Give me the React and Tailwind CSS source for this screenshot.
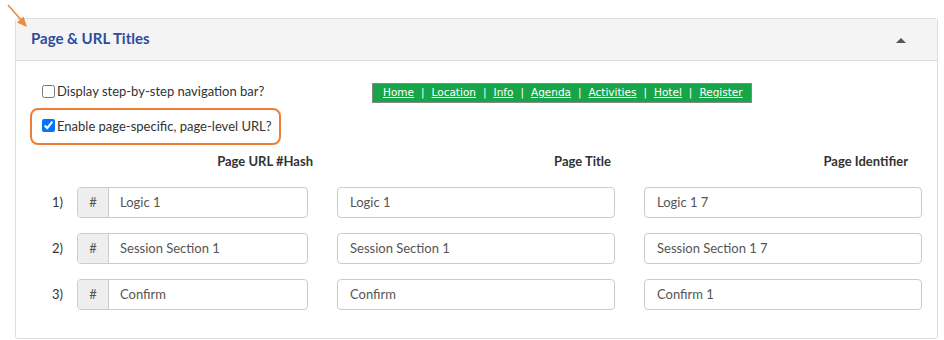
import React from "react";

const rows = [
  { n: "1)", hash: "Logic 1", title: "Logic 1", id: "Logic 1 7" },
  { n: "2)", hash: "Session Section 1", title: "Session Section 1", id: "Session Section 1 7" },
  { n: "3)", hash: "Confirm", title: "Confirm", id: "Confirm 1" },
];

const links = ["Home", "Location", "Info", "Agenda", "Activities", "Hotel", "Register"];

export default function App() {
  return (
    <div className="relative w-[944px] h-[340px] bg-white pt-[18px] pl-[15px]" style={{ fontFamily: "Lato, 'Noto Sans', sans-serif" }}>
      <svg className="absolute left-0 top-0" width="34" height="32" viewBox="0 0 34 32">
        <line x1="8" y1="5" x2="22" y2="21" stroke="#ef8a3d" strokeWidth="1.6" />
        <polygon points="27,27 17,22.5 23.5,16.5" fill="#ef8a3d" />
      </svg>
      <div className="w-[923px] h-[321px] border border-[#dddddd] rounded-[3px] bg-white">
        <div className="h-[42px] bg-[#f4f4f4] border-b border-[#dddddd] flex items-center justify-between pl-[15px] pr-[31px]">
          <span className="text-[15px] font-bold text-[#2d4c9c] -mt-[2px]">Page &amp; URL Titles</span>
          <span className="w-0 h-0 border-l-[5px] border-r-[5px] border-b-[5px] border-l-transparent border-r-transparent border-b-[#555555] mt-[1px]"></span>
        </div>
        <div className="pt-[22px]">
          <div className="flex items-center h-[20px]">
            <label className="w-[356px] pl-[26px] flex items-center text-[13px] text-[#333333]">
              <input type="checkbox" className="w-[13px] h-[13px] m-0 mr-[2px] -mt-[4px]" />
              <span className="-mt-[2px]">Display step-by-step navigation bar?</span>
            </label>
            <div className="h-[20px] w-[380px] bg-[#17a54a] border border-[#888888] flex items-center pl-[10px] text-white text-[10.5px]" style={{ fontFamily: "'DejaVu Sans', Verdana, sans-serif" }}>
              {links.map((l, i) => (
                <React.Fragment key={l}>
                  <span className="underline">{l}</span>
                  {i < links.length - 1 && <span className="mx-[7px]">|</span>}
                </React.Fragment>
              ))}
            </div>
          </div>
          <div className="ml-[14px] mt-[5px] w-[251px] h-[37px] border-2 border-[#ec7f35] rounded-[8px] flex items-center pl-[10px] text-[13px] text-[#333333]">
            <input type="checkbox" defaultChecked className="w-[13px] h-[13px] m-0 mr-[2px] -mt-[2px]" />
            <span>Enable page-specific, page-level URL?</span>
          </div>
          <div className="flex mt-[9px] h-[16px] items-center text-[13px] font-bold text-[#333333]">
            <div className="w-[297px] text-right">Page URL #Hash</div>
            <div className="w-[298px] text-right">Page Title</div>
            <div className="w-[297px] text-right">Page Identifier</div>
          </div>
          <div className="mt-[17px] flex flex-col gap-[15px]">
            {rows.map((r) => (
              <div key={r.n} className="flex items-center h-[31px]">
                <div className="w-[61px] pl-[36px] text-[13px] text-[#333333]">{r.n}</div>
                <div className="w-[231px] h-[31px] flex border border-[#cccccc] rounded-[4px] overflow-hidden">
                  <div className="w-[31px] bg-[#eeeeee] border-r border-[#cccccc] flex items-center justify-center text-[13px] text-[#555555]">#</div>
                  <div className="flex-1 flex items-center pl-[11px] text-[13px] text-[#555555]">{r.hash}</div>
                </div>
                <div className="ml-[29px] w-[278px] h-[31px] border border-[#cccccc] rounded-[4px] flex items-center pl-[12px] text-[13px] text-[#555555]">{r.title}</div>
                <div className="ml-[29px] w-[278px] h-[31px] border border-[#cccccc] rounded-[4px] flex items-center pl-[12px] text-[13px] text-[#555555]">{r.id}</div>
              </div>
            ))}
          </div>
        </div>
      </div>
    </div>
  );
}
